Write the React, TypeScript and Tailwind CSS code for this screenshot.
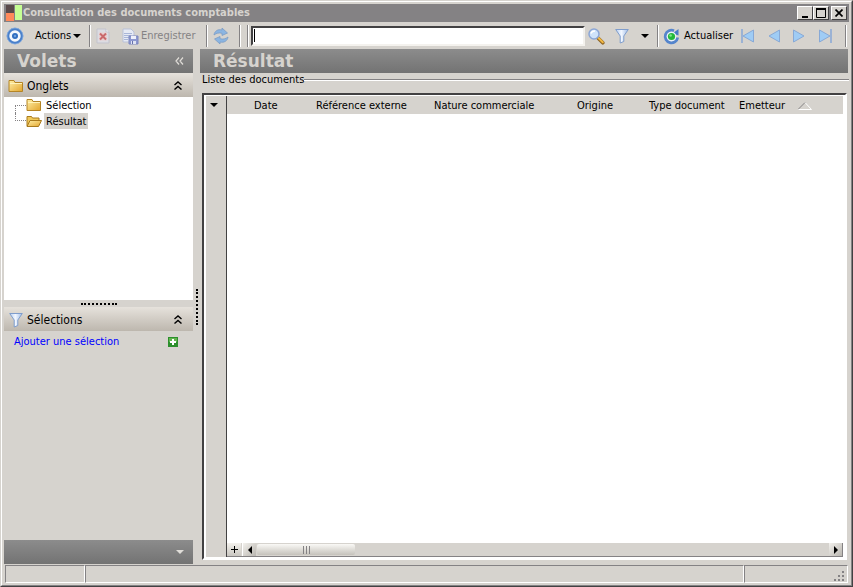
import React from "react";

function Separator({ className = "" }: { className?: string }) {
  return (
    <span
      className={"block h-[22px] w-[2px] shrink-0 border-r border-l border-r-white border-l-[#848284] " + className}
    />
  );
}

function TargetIcon() {
  return (
    <svg width="18" height="18" viewBox="0 0 18 18" aria-hidden="true">
      <circle cx="9" cy="9" r="7" fill="#f4f8fd" stroke="#4a80ca" strokeWidth="2.6" />
      <circle cx="9" cy="9" r="8" fill="none" stroke="#8fb3e2" strokeWidth="0.7" />
      <circle cx="9" cy="9" r="3" fill="#2f6dc0" />
      <circle cx="9" cy="9" r="1.200" fill="#6ea0dc" />
    </svg>
  );
}

function DeleteIcon() {
  return (
    <svg width="14" height="16" viewBox="0 0 14 16" aria-hidden="true">
      <path d="M1 1h9l3 3v11H1z" fill="#dcdce2" stroke="#c3c3cc" />
      <path d="M10 1v3h3" fill="#f4f4f7" stroke="#c3c3cc" />
      <path d="M3 4.500h8v8H3z" fill="#e9cfd0" />
      <path d="M4 5.500l6 6M10 5.500l-6 6" stroke="#c9696c" strokeWidth="2" />
    </svg>
  );
}

function SaveIcon() {
  return (
    <svg width="17" height="17" viewBox="0 0 17 17" aria-hidden="true">
      <path d="M1 1h8l3 3v10H1z" fill="#e6eaf4" stroke="#b9c1d8" />
      <path d="M2 5.500h8M2 7.500h7M2 9.500h5M2 11.500h4" stroke="#a9b6d8" />
      <path d="M7 8h9v8H7z" fill="#8d98d0" stroke="#7c87bf" />
      <path d="M9 8h5v3H9z" fill="#eef0fa" />
      <path d="M9 13h5v3H9z" fill="#dfe3f3" />
      <path d="M10 13h1v3h-1z" fill="#6671ad" />
    </svg>
  );
}

function SyncIcon() {
  return (
    <svg width="18" height="18" viewBox="0 0 18 18" aria-hidden="true">
      <path d="M2 8C2.500 4 6 1.800 10 3V1l5.500 5L10 8.500V6.300C7 5.500 4.500 6 2 8z" fill="#8bb5e2" stroke="#7c9cc4" strokeWidth="0.8" />
      <path d="M16 10c-.5 4-4 6-8 5v2l-5.500-5L8 9.500v2.200c3 .8 5.500.3 8-1.700z" fill="#8bb5e2" stroke="#7c9cc4" strokeWidth="0.8" />
    </svg>
  );
}

function SearchIcon() {
  return (
    <svg width="17" height="17" viewBox="0 0 17 17" aria-hidden="true">
      <path d="M9.500 9.500l5.300 5.300" stroke="#8d6424" strokeWidth="3.600" strokeLinecap="round" />
      <path d="M10.500 10l4.300 4.300" stroke="#f1b843" strokeWidth="2" strokeLinecap="round" />
      <circle cx="6" cy="6" r="5" fill="#cfe3fb" stroke="#8ba6d6" strokeWidth="1.500" />
      <path d="M3 5.500C3.500 3.500 5 3 7 3" fill="none" stroke="#fff" strokeWidth="1.500" />
    </svg>
  );
}

function FilterIcon() {
  return (
    <svg width="14" height="16" viewBox="0 0 14 16" aria-hidden="true">
      <defs>
        <linearGradient id="funnel" x1="0" x2="1">
          <stop offset="0" stopColor="#b5cdf0" />
          <stop offset="0.45" stopColor="#f2f7ff" />
          <stop offset="1" stopColor="#9dbae6" />
        </linearGradient>
      </defs>
      <path d="M.7 1.500h12.600L8.800 8v5.500L5.200 15V8z" fill="url(#funnel)" stroke="#7f9dcc" />
    </svg>
  );
}

function RefreshIcon() {
  return (
    <svg width="17" height="17" viewBox="0 0 17 17" aria-hidden="true">
      <path d="M11 2.700A6.300 6.300 0 1 0 14.700 9.500" fill="none" stroke="#5585cc" strokeWidth="2.800" />
      <path d="M9.500 5.500L15.500 1v6.500z" fill="#4779c6" />
      <circle cx="8.500" cy="8.500" r="4.800" fill="#e8f2fb" />
      <circle cx="8.500" cy="8.500" r="3.600" fill="#22b83a" />
      <circle cx="7.600" cy="7.500" r="1.300" fill="#7ee68c" />
    </svg>
  );
}

function NavIcon({ kind }: { kind: "first" | "previous" | "next" | "last" }) {
  const forward = kind === "next" || kind === "last";
  return (
    <svg width="15" height="14" viewBox="0 0 15 14" aria-hidden="true">
      {kind === "first" && <path d="M1 0h2v14H1z" fill="#9bb2d4" />}
      {kind === "last" && <path d="M12 0h2v14h-2z" fill="#9bb2d4" />}
      {forward ? (
        <path d="M1.500 1v12L12 7z" fill="#9fccf5" stroke="#88a9d6" />
      ) : (
        <path d="M13.500 1v12L3 7z" fill="#9fccf5" stroke="#88a9d6" />
      )}
    </svg>
  );
}

function FolderIcon({ open = false }: { open?: boolean }) {
  return (
    <svg width="16" height="14" viewBox="0 0 16 14" aria-hidden="true" className="shrink-0">
      <defs>
        <linearGradient id="folder" x1="0" y1="0" x2="1" y2="1">
          <stop offset="0" stopColor="#fff0a8" />
          <stop offset="1" stopColor="#e3a52c" />
        </linearGradient>
      </defs>
      {open ? (
        <>
          <path d="M1 12V2.500h4.500l1 1.500H13v3" fill="#f0c95a" stroke="#a97a1c" />
          <path d="M1 12.500L4 6.500h11.500L12.500 12.500z" fill="url(#folder)" stroke="#a97a1c" />
        </>
      ) : (
        <>
          <path d="M1 12.500v-11h5l1 2h7.500v9z" fill="url(#folder)" stroke="#b48425" />
          <path d="M2 4.500h12" stroke="#fff3b9" />
        </>
      )}
    </svg>
  );
}

function DownArrow({ className = "fill-black" }: { className?: string }) {
  return (
    <svg width="8" height="4" viewBox="0 0 8 4" className={className} aria-hidden="true">
      <path d="M0 0h8L4 4z" />
    </svg>
  );
}

function CollapseIcon() {
  return (
    <svg width="8" height="9" viewBox="0 0 8 9" aria-hidden="true">
      <path d="M.5 4L4 1l3.500 3M.5 8.500L4 5.500l3.500 3" fill="none" stroke="#000" strokeWidth="1.400" />
    </svg>
  );
}

function PanelHeader({ icon, title }: { icon: React.ReactNode; title: string }) {
  return (
    <header className="flex h-6 shrink-0 items-center gap-1 bg-linear-to-b from-[#e6e2dc] to-[#bdb7ae] pt-px pr-[11px] pl-1 text-[12px]">
      <span className="flex w-[15px] justify-center">{icon}</span>
      <h2 className="flex-1">{title}</h2>
      <button type="button" aria-label={"Réduire " + title}>
        <CollapseIcon />
      </button>
    </header>
  );
}

const captionButton =
  "flex h-[14px] w-4 items-center justify-center border border-t-white border-l-white border-r-[#424142] border-b-[#424142] bg-[#d6d3ce]";

function TitleBar() {
  return (
    <header className="flex h-[18px] shrink-0 items-center bg-[#848284] px-[2px]">
      <svg width="16" height="16" viewBox="0 0 16 16" aria-hidden="true">
        <path d="M0 0h8v8H0z" fill="#5a4a4a" />
        <path d="M0 8h8v8H0z" fill="#ff8a5a" />
        <path d="M9 0h7v15H9z" fill="#c6ff94" />
      </svg>
      <h1 className="ml-px flex-1 pt-px text-[11px] font-bold text-[#d6d3ce]">Consultation des documents comptables</h1>
      <button type="button" aria-label="Minimiser" className={captionButton}>
        <svg width="10" height="9" viewBox="0 0 10 9"><path d="M2 7h6v2H2z" /></svg>
      </button>
      <button type="button" aria-label="Agrandir" className={captionButton}>
        <svg width="10" height="10" viewBox="0 0 10 10"><path d="M.5 1.500h9v8h-9z" fill="none" stroke="#000" /><path d="M0 0h10v2H0z" /></svg>
      </button>
      <button type="button" aria-label="Fermer" className={captionButton + " ml-[2px]"}>
        <svg width="8" height="8" viewBox="0 0 8 8"><path d="M.5.5l7 7M7.500.5l-7 7" stroke="#000" strokeWidth="1.700" /></svg>
      </button>
    </header>
  );
}

function Toolbar() {
  return (
    <div role="toolbar" className="flex h-[27px] shrink-0 items-center pt-px">
      <button type="button" aria-label="Cible" className="mr-[11px] ml-[2px]"><TargetIcon /></button>
      <button type="button" className="flex w-[51px] items-center gap-[2px]">
        Actions
        <DownArrow />
      </button>
      <Separator className="mr-[5px] ml-[3px]" />
      <button type="button" aria-label="Supprimer" className="w-[14px]"><DeleteIcon /></button>
      <button type="button" className="ml-3 flex w-[77px] items-center gap-[2px] text-[#848284]">
        <span className="shrink-0"><SaveIcon /></span>
        Enregistrer
      </button>
      <Separator className="mr-1 ml-[7px]" />
      <button type="button" aria-label="Synchroniser"><SyncIcon /></button>
      <Separator className="mr-[6px] ml-[9px]" />
      <Separator />
      <div className="relative ml-[2px] flex-1">
        <input
          type="text"
          aria-label="Rechercher"
          className="block h-5 w-full border-2 border-t-[#424142] border-r-[#f4f2ee] border-b-[#f4f2ee] border-l-[#424142] bg-white px-1 outline-none"
        />
        <span className="absolute top-[3px] left-[3px] h-[13px] w-px bg-black" />
      </div>
      <button type="button" aria-label="Chercher" className="ml-[3px]"><SearchIcon /></button>
      <button type="button" aria-label="Filtrer" className="ml-[10px]"><FilterIcon /></button>
      <button type="button" aria-label="Options de filtre" className="ml-3"><DownArrow /></button>
      <Separator className="mr-1 ml-2" />
      <button type="button" className="flex w-[70px] items-center gap-1">
        <span className="shrink-0"><RefreshIcon /></span>
        Actualiser
      </button>
      <span className="ml-[7px] flex gap-[11px]">
        <button type="button" aria-label="Premier"><NavIcon kind="first" /></button>
        <button type="button" aria-label="Précédent"><NavIcon kind="previous" /></button>
        <button type="button" aria-label="Suivant"><NavIcon kind="next" /></button>
        <button type="button" aria-label="Dernier"><NavIcon kind="last" /></button>
      </span>
      <Separator className="mr-[2px] ml-3" />
    </div>
  );
}

const banner = "flex h-6 shrink-0 items-center bg-linear-to-b from-[#8c8c8c] to-[#737373] text-[#d6d3ce]";
const bannerTitle = "flex-1 pl-[13px] font-['DejaVu_Sans',sans-serif] text-[17px] leading-6 font-bold";

function Sidebar() {
  return (
    <aside className="flex w-[189px] shrink-0 flex-col">
      <div className={banner}>
        <h2 className={bannerTitle}>Volets</h2>
        <button type="button" aria-label="Réduire les volets" className="mr-[9px]">
          <svg width="9" height="8" viewBox="0 0 9 8"><path d="M4 .5L1 4l3 3.500M8 .5L5 4l3 3.500" fill="none" stroke="#e0ddd8" strokeWidth="1.200" /></svg>
        </button>
      </div>
      <PanelHeader icon={<FolderIcon />} title="Onglets" />
      <ul className="h-[203px] shrink-0 bg-white pl-[11px] leading-4">
        <li className="flex h-4 items-center">
          <span className="mt-2 h-2 w-[11px] border-t border-l border-dotted border-[#848284]" />
          <FolderIcon />
          <a href="#selection" className="ml-[2px] px-[2px] pt-px">Sélection</a>
        </li>
        <li className="flex h-4 items-center">
          <span className="mb-2 h-2 w-[11px] border-b border-l border-dotted border-[#848284]" />
          <FolderIcon open />
          <a href="#resultat" className="ml-[2px] bg-[#d6d3ce] px-[2px] pt-px leading-[15px]">Résultat</a>
        </li>
      </ul>
      <div className="flex h-[7px] shrink-0 items-center justify-center">
        <span className="w-[36px] border-t-2 border-dotted border-black" />
      </div>
      <PanelHeader icon={<FilterIcon />} title="Sélections" />
      <div className="flex items-center justify-between py-1 pr-[15px] pl-[10px] leading-[14px]">
        <a href="#ajouter" className="text-[#0000ff]">Ajouter une sélection</a>
        <button type="button" aria-label="Ajouter">
          <svg width="10" height="10" viewBox="0 0 10 10"><path d="M0 0h10v10H0z" fill="#2c8f2c" /><path d="M1 1h8v4H1z" fill="#62b54e" /><path d="M4 2h2v2h2v2H6v2H4V6H2V4h2z" fill="#fff" /></svg>
        </button>
      </div>
      <div className={banner + " mt-auto justify-end pr-[9px]"}>
        <button type="button" aria-label="Configurer"><DownArrow className="fill-[#e0ddd8]" /></button>
      </div>
    </aside>
  );
}

const columns = [
  { label: "Date", width: "w-[62px]" },
  { label: "Référence externe", width: "w-[118px]" },
  { label: "Nature commerciale", width: "w-[143px]" },
  { label: "Origine", width: "w-[72px]" },
  { label: "Type document", width: "w-[90px]" },
];

function DocumentGrid() {
  return (
    <div className="mx-[2px] flex min-h-0 flex-1 border-2 border-t-[#424142] border-r-white border-b-white border-l-[#424142] bg-white pt-px pr-[2px] pb-px pl-[2px]">
      <div className="flex w-[21px] shrink-0 justify-center border-r border-[#424142] bg-[#d6d3ce] pt-[7px] pr-1">
        <button type="button" aria-label="Choisir les colonnes" className="h-1"><DownArrow /></button>
      </div>
      <div className="flex min-w-0 flex-1 flex-col">
        <table className="w-full table-fixed">
          <thead>
            <tr className="h-[18px] bg-[#d6d3ce] text-left leading-[17px] whitespace-nowrap">
              <td className="w-[27px]" />
              {columns.map((c) => (
                <th key={c.label} scope="col" className={"pt-px font-normal " + c.width}>{c.label}</th>
              ))}
              <th scope="col" className="pt-px font-normal">
                <span className="flex items-center gap-[13px]">
                  Emetteur
                  <svg width="14" height="8" viewBox="0 0 14 8"><path d="M13.500 0v7.500H0" fill="none" stroke="none" /><path d="M7 .5l6.500 7H0" fill="none" stroke="#fff" /><path d="M0 7.500L7 .5" stroke="#848284" /></svg>
                </span>
              </th>
            </tr>
          </thead>
        </table>
        <div className="mt-auto flex h-[14px] border-b border-[#848284] bg-[#d6d3ce]">
          <button type="button" aria-label="Ajouter une ligne" className="flex w-[14px] items-center justify-center bg-linear-to-b from-[#f3f1ed] to-[#c9c6c0]">
            <svg width="7" height="7" viewBox="0 0 7 7"><path d="M3 0h1v3h3v1H4v3H3V4H0V3h3z" /></svg>
          </button>
          <button type="button" aria-label="Défiler à gauche" className="ml-px flex w-[14px] items-center justify-center border-l border-white bg-linear-to-br from-[#f3f1ed] to-[#b9b6b0]">
            <svg width="4" height="8" viewBox="0 0 4 8"><path d="M4 0v8L0 4z" /></svg>
          </button>
          <div className="flex flex-1 pl-px">
            <div className="mt-px flex h-[11px] w-[98px] items-center justify-center gap-[2px] rounded-[2px] bg-linear-to-b from-[#faf9f6] to-[#c5c2bb]">
              <span className="h-2 w-px bg-[#848284]" />
              <span className="h-2 w-px bg-[#848284]" />
              <span className="h-2 w-px bg-[#848284]" />
            </div>
          </div>
          <button type="button" aria-label="Défiler à droite" className="flex w-[14px] items-center justify-center border-r border-[#848284] bg-linear-to-br from-[#f3f1ed] to-[#b9b6b0]">
            <svg width="4" height="8" viewBox="0 0 4 8"><path d="M0 0v8l4-4z" /></svg>
          </button>
        </div>
      </div>
    </div>
  );
}

function StatusBar() {
  const cell = "border border-t-[#848284] border-l-[#848284] border-r-white border-b-white";
  return (
    <footer className="mx-px mt-px flex h-[18px] shrink-0">
      <div className={cell + " w-[80px]"} />
      <div className={cell + " flex-1"} />
      <div className={cell + " flex w-[104px] items-end justify-end pr-[2px]"}>
        <svg width="11" height="11" viewBox="0 0 11 11" aria-hidden="true">
          <path d="M8 0h2v2H8zM4 4h2v2H4zM8 4h2v2H8zM0 8h2v2H0zM4 8h2v2H4zM8 8h2v2H8z" fill="#848284" />
        </svg>
      </div>
    </footer>
  );
}

export default function App() {
  return (
    <div className="flex h-screen flex-col border border-t-[#d6d3ce] border-r-[#424142] border-b-[#424142] border-l-[#d6d3ce] bg-[#d6d3ce] font-['DejaVu_Sans_Condensed','DejaVu_Sans',sans-serif] text-[11px] text-black">
      <div className="flex min-h-0 flex-1 flex-col border border-t-white border-r-[#848284] border-b-[#848284] border-l-white p-[2px]">
        <TitleBar />
        <Toolbar />
        <main className="flex min-h-0 flex-1">
          <Sidebar />
          <div className="flex w-[7px] shrink-0 items-center justify-center">
            <span className="h-[36px] border-l-2 border-dotted border-black" />
          </div>
          <section className="flex min-w-0 flex-1 flex-col">
            <div className={banner + " mr-px"}>
              <h2 className={bannerTitle}>Résultat</h2>
            </div>
            <div className="flex h-5 shrink-0 items-start pl-[2px]">
              <h3 className="leading-[14px]">Liste des documents</h3>
              <span className="mt-[6px] h-[2px] flex-1 border-t border-b border-t-[#848284] border-b-white" />
            </div>
            <DocumentGrid />
            <div className="h-1 shrink-0" />
          </section>
        </main>
        <StatusBar />
      </div>
    </div>
  );
}
